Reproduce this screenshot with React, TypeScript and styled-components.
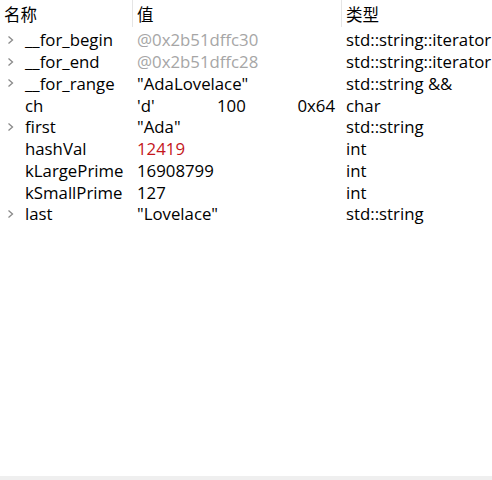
import React from "react";
import styled, { createGlobalStyle } from "styled-components";

const GlobalStyle = createGlobalStyle`
    html, body {
        margin: 0;
        padding: 0;
        background: #ffffff;
    }
    body {
        font-family: "Open Sans", "Noto Sans", "Noto Sans CJK SC", sans-serif;
        font-size: 16.8px;
        color: #000000;
    }
`;

const Panel = styled.div`
    width: 492px;
    height: 480px;
    display: flex;
    flex-direction: column;
    background: #ffffff;
    overflow: hidden;
`;

const Table = styled.div`
    flex: 1;
    display: flex;
    flex-direction: column;
`;

const cols = "132px 209px 151px";

const HeaderRow = styled.div`
    display: grid;
    grid-template-columns: ${cols};
    height: 29px;
`;

const HeaderCell = styled.div<{ $divider?: boolean }>`
    display: flex;
    align-items: center;
    height: 27px;
    padding-left: 4px;
    border-left: ${p => (p.$divider ? "1px solid #e5e5e5" : "none")};
    font-family: "Noto Sans CJK SC", sans-serif;
    font-size: 16.5px;
`;

const Row = styled.div`
    display: grid;
    grid-template-columns: ${cols};
    height: 21.75px;
    align-items: center;
    white-space: nowrap;
`;

const NameCell = styled.div`
    display: flex;
    align-items: center;
    overflow: hidden;
`;

const Toggle = styled.span`
    width: 25px;
    display: flex;
    align-items: center;
    padding-left: 7px;
    box-sizing: border-box;
`;

const ValueCell = styled.div<{ $tone?: "dim" | "changed" }>`
    padding-left: 5px;
    overflow: hidden;
    color: ${p =>
        p.$tone === "dim" ? "#a6a6a6" : p.$tone === "changed" ? "#c4161c" : "#000000"};
`;

const SplitValue = styled.div`
    display: grid;
    grid-template-columns: 80px 80px 38px;
    padding-left: 5px;
`;

const Right = styled.span`
    text-align: right;
`;

const TypeCell = styled.div`
    padding-left: 5px;
    overflow: hidden;
`;

const Footer = styled.div`
    height: 4px;
    background: #efefef;
`;

function Chevron() {
    return (
        <svg width="7" height="10" viewBox="0 0 7 10">
            <polyline points="1.5,1.5 5.5,5 1.5,8.5" fill="none" stroke="#8a8a8a" strokeWidth="1.3" />
        </svg>
    );
}

type Item = {
    name: string;
    value: string;
    type: string;
    expandable?: boolean;
    tone?: "dim" | "changed";
};

const items: Item[] = [
    { name: "__for_begin", value: "@0x2b51dffc30", type: "std::string::iterator", expandable: true, tone: "dim" },
    { name: "__for_end", value: "@0x2b51dffc28", type: "std::string::iterator", expandable: true, tone: "dim" },
    { name: "__for_range", value: "\"AdaLovelace\"", type: "std::string &&", expandable: true },
    { name: "ch", value: "", type: "char" },
    { name: "first", value: "\"Ada\"", type: "std::string", expandable: true },
    { name: "hashVal", value: "12419", type: "int", tone: "changed" },
    { name: "kLargePrime", value: "16908799", type: "int" },
    { name: "kSmallPrime", value: "127", type: "int" },
    { name: "last", value: "\"Lovelace\"", type: "std::string", expandable: true },
];

export default function App() {
    return (
        <Panel>
            <GlobalStyle />
            <Table>
                <HeaderRow>
                    <HeaderCell>名称</HeaderCell>
                    <HeaderCell $divider>值</HeaderCell>
                    <HeaderCell $divider>类型</HeaderCell>
                </HeaderRow>
                {items.map(item => (
                    <Row key={item.name}>
                        <NameCell>
                            <Toggle>{item.expandable && <Chevron />}</Toggle>
                            {item.name}
                        </NameCell>
                        {item.name === "ch" ? (
                            <SplitValue>
                                <span>'d'</span>
                                <span>100</span>
                                <Right>0x64</Right>
                            </SplitValue>
                        ) : (
                            <ValueCell $tone={item.tone}>{item.value}</ValueCell>
                        )}
                        <TypeCell>{item.type}</TypeCell>
                    </Row>
                ))}
            </Table>
            <Footer />
        </Panel>
    );
}
